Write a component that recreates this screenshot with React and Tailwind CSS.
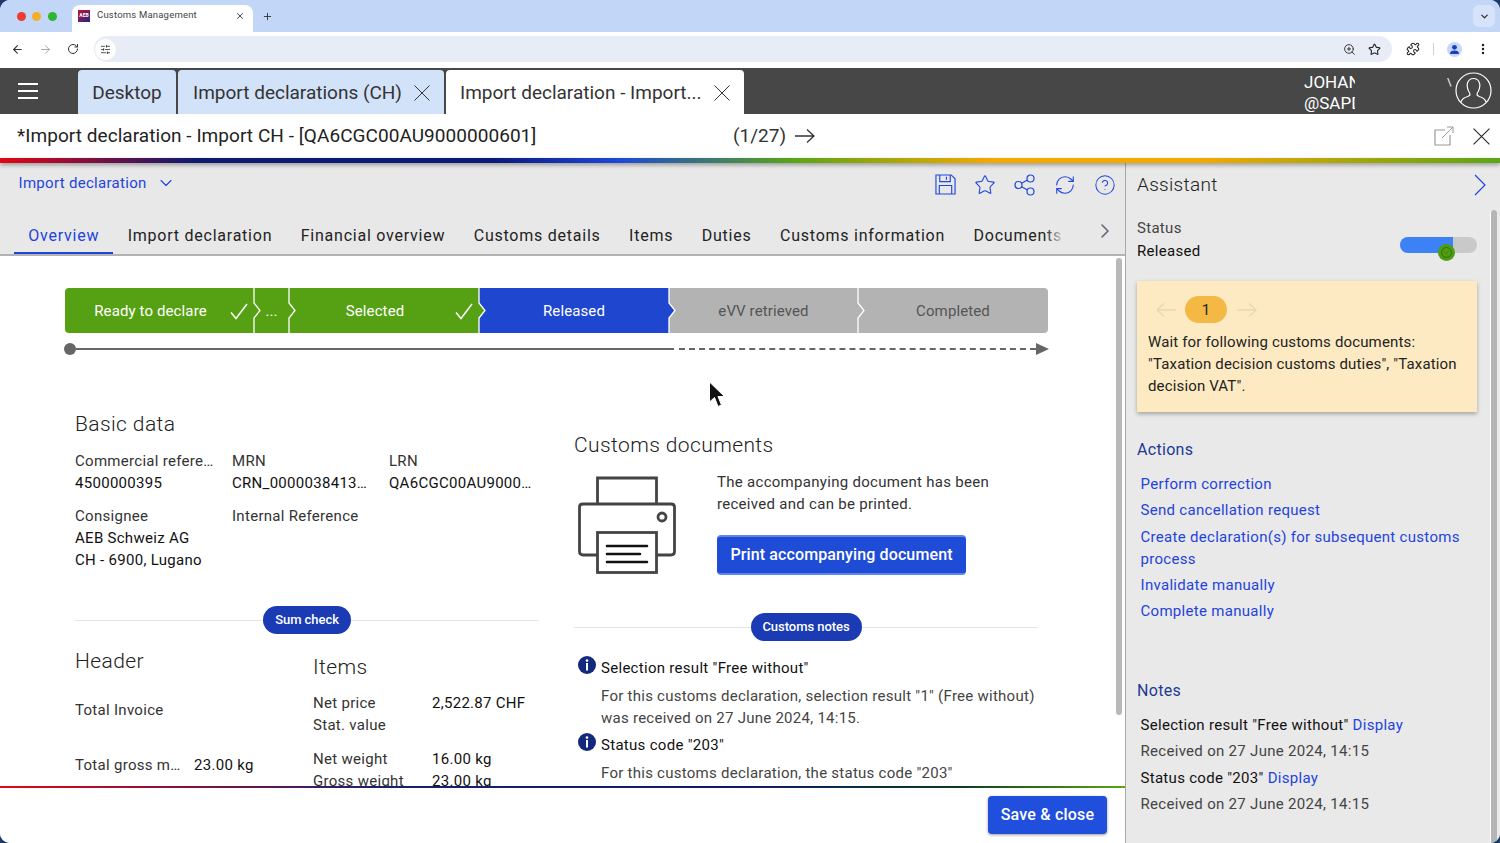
import React from 'react';
import {
  ArrowLeft, ArrowRight, RotateCw, SlidersHorizontal, ZoomIn, Star, Puzzle, EllipsisVertical,
  ChevronDown, ChevronRight, Plus, X, CircleHelp, RefreshCw, Check,
} from 'lucide-react';

const tabs = ['Overview', 'Import declaration', 'Financial overview', 'Customs details', 'Items', 'Duties', 'Customs information', 'Documents'];

const steps = [
  { label: 'Ready to declare', w: 'w-[189px]', bg: 'bg-[#55a113]', check: true, edge: '#55a113', round: 'rounded-l-[4px]' },
  { label: '...', w: 'w-[35px]', bg: 'bg-[#55a113]', edge: '#55a113' },
  { label: 'Selected', w: 'w-[190px]', bg: 'bg-[#55a113]', check: true, edge: '#55a113' },
  { label: 'Released', w: 'w-[190px]', bg: 'bg-[#1e46cf]', edge: '#1e46cf' },
  { label: 'eVV retrieved', w: 'w-[189px]', bg: 'bg-[#b3b3b3]', dark: true, edge: '#b3b3b3' },
  { label: 'Completed', w: 'w-[190px]', bg: 'bg-[#b3b3b3]', dark: true, round: 'rounded-r-[4px]' },
];

const links = ['Perform correction', 'Send cancellation request', 'Create declaration(s) for subsequent customs process', 'Invalidate manually', 'Complete manually'];

const Cross = ({ size, className = '' }) => (
  <svg width={size} height={size} viewBox="0 0 16 16" fill="none" stroke="currentColor" strokeWidth="1" className={className}>
    <path d="M0.5 0.5 L15.5 15.5 M15.5 0.5 L0.5 15.5" />
  </svg>
);

const LongArrow = ({ left, className = '' }) => (
  <svg width="20" height="14" viewBox="0 0 20 14" fill="none" stroke="currentColor" strokeWidth="1.3" className={className}>
    {left ? <path d="M20 7 H1 M8 0.5 L1 7 L8 13.5" /> : <path d="M0 7 H19 M12 0.5 L19 7 L12 13.5" />}
  </svg>
);

const Stepper = () => (
  <div className="flex h-[45px] w-[983px]">
    {steps.map((s) => (
      <div key={s.label} className={`relative flex items-center justify-center text-[15px] tracking-[0.12px] ${s.w} ${s.bg} ${s.round || ''} ${s.dark ? 'text-[#555]' : 'text-white'}`}>
        <span className={s.check ? 'pr-[18px]' : ''}>{s.label}</span>
        {s.check && (
          <svg width="18" height="17" viewBox="0 0 18 17" fill="none" className="absolute right-[6px] top-[15px]">
            <path d="M1 9.5 L6 15.5 L17 1" stroke="#fff" strokeWidth="1.5" />
          </svg>
        )}
        {s.edge && (
          <svg width="9" height="45" viewBox="0 0 9 45" className="absolute right-[-8px] top-0 z-10">
            <path d="M1 15 L7 22.5 L1 30 Z" fill={s.edge} />
            <path d="M1 0 V15 L7 22.5 L1 30 V45" fill="none" stroke="#fff" strokeWidth="1.3" />
          </svg>
        )}
      </div>
    ))}
  </div>
);

const Progress = () => (
  <div className="-ml-[1px] mt-[10px] flex w-[985px] items-center">
    <div className="h-[12px] w-[12px] rounded-full bg-[#666]" />
    <div className="h-[2px] w-[598px] bg-[#666]" />
    <div className="ml-[5px] flex-1 border-t-2 border-dashed border-[#666]" />
    <svg width="13" height="12" viewBox="0 0 13 12"><path d="M0 0 L13 6 L0 12 Z" fill="#666" /></svg>
  </div>
);

const Divider = ({ label, pill }) => (
  <div className="flex h-[28px] items-center">
    <div className="h-[1px] flex-1 bg-[#e4e4e4]" />
    <div className={`flex h-[28px] items-center justify-center rounded-full bg-[#1a3bb3] text-[13px] font-medium tracking-[-0.05px] text-white ${pill}`}>{label}</div>
    <div className="h-[1px] flex-1 bg-[#e4e4e4]" />
  </div>
);

const InfoIcon = () => (
  <svg width="18" height="18" viewBox="0 0 18 18" className="-mt-[1px] shrink-0">
    <circle cx="9" cy="9" r="9" fill="#12297d" />
    <circle cx="9" cy="4.6" r="1.3" fill="#fff" />
    <rect x="8" y="7" width="2" height="7.5" fill="#fff" />
  </svg>
);

const PrinterIcon = () => (
  <svg width="98" height="98" viewBox="0 0 98 98" fill="none" className="ml-[4px] mt-[5px] shrink-0">
    <path d="M19.5 28 V2 H78.5 V28" stroke="#444" strokeWidth="2.8" />
    <path d="M19.5 79 H5 Q1.5 79 1.5 75.5 V31 Q1.5 28 5 28 H93 Q96.5 28 96.5 31 V75.5 Q96.5 79 93 79 H78.5" stroke="#444" strokeWidth="2.8" />
    <rect x="19.5" y="56.5" width="59" height="40" stroke="#444" strokeWidth="2.8" />
    <circle cx="84" cy="41" r="4" stroke="#444" strokeWidth="2.8" />
    <path d="M29 70 H69 M29 78 H62 M29 86 H69" stroke="#111" strokeWidth="2.6" strokeLinecap="round" />
  </svg>
);

const BrowserChrome = () => (
  <>
    <div className="flex h-[32px] items-end bg-[#c2d6f8] pl-[16.5px]">
      <div className="mb-[11px] flex gap-[6.5px]">
        <div className="h-[9px] w-[9px] rounded-full bg-[#ee3b30]" />
        <div className="h-[9px] w-[9px] rounded-full bg-[#f5ad2b]" />
        <div className="h-[9px] w-[9px] rounded-full bg-[#2fb52f]" />
      </div>
      <div className="ml-[15.5px] flex h-[27px] w-[181px] items-center rounded-t-[8px] bg-white pb-[6px] pl-[6px] pr-[8px]">
        <div className="flex h-[12px] w-[12px] items-center justify-center overflow-hidden bg-[linear-gradient(135deg,#c2122f,#1c2a8c)] text-[5px] font-bold text-white">AEB</div>
        <span className="ml-[7px] flex-1 text-[9.5px] tracking-[0.2px] text-[#444]">Customs Management</span>
        <X size={10} strokeWidth={2} className="text-[#222]" />
      </div>
      <Plus size={11} strokeWidth={2} className="mb-[10px] ml-[9px] text-[#333]" />
      <div className="mb-[5px] ml-auto mr-[5px] flex h-[22px] w-[22px] items-center justify-center rounded-[6px] bg-[#d6e3fa]">
        <ChevronDown size={11} strokeWidth={2.5} className="text-[#222]" />
      </div>
    </div>
    <div className="flex h-[36px] items-center bg-white pb-[2px] pl-[11px]">
      <ArrowLeft size={13} strokeWidth={2} className="text-[#333]" />
      <ArrowRight size={13} strokeWidth={1.6} className="ml-[15px] text-[#999]" />
      <RotateCw size={12} strokeWidth={2} className="ml-[15px] text-[#333]" />
      <div className="ml-[15px] flex h-[26px] w-[1298px] items-center rounded-full bg-[#e7ecf6] pl-[1px] pr-[11px]">
        <div className="flex h-[21px] w-[21px] items-center justify-center rounded-full bg-white">
          <SlidersHorizontal size={11} strokeWidth={1.8} className="text-[#333]" />
        </div>
        <ZoomIn size={13} strokeWidth={1.8} className="ml-auto text-[#333]" />
        <Star size={13} strokeWidth={2} className="ml-[12px] text-[#222]" />
      </div>
      <Puzzle size={14} strokeWidth={1.8} className="ml-[14px] text-[#222]" />
      <div className="ml-[13px] h-[12px] w-[1px] bg-[#c5d3ea]" />
      <div className="ml-[13px] flex h-[15px] w-[15px] items-center justify-center rounded-full bg-[#c6d7f8]">
        <svg width="11" height="11" viewBox="0 0 11 11"><circle cx="5.5" cy="3.3" r="2.4" fill="#1a3fb8" /><path d="M1 10 Q1 6.6 5.5 6.6 Q10 6.6 10 10 Z" fill="#1a3fb8" /></svg>
      </div>
      <EllipsisVertical size={14} strokeWidth={2.2} className="ml-[14px] text-[#222]" />
    </div>
  </>
);

const AppHeader = () => (
  <div className="flex h-[46px] items-end bg-[#474747] pt-[2px]">
    <div className="mb-[15px] ml-[18px] flex w-[20px] flex-col gap-[5px]">
      <div className="h-[2px] bg-white" />
      <div className="h-[2px] bg-white" />
      <div className="h-[2px] bg-white" />
    </div>
    <div className="ml-[40px] flex h-[44px] w-[98px] items-center justify-center rounded-t-[4px] bg-[#d2e2f8] pt-[2px] text-[19px] text-[#333]">Desktop</div>
    <div className="ml-[2px] flex h-[44px] w-[266px] items-center rounded-t-[4px] bg-[#d2e2f8] pl-[15px] pt-[2px] text-[19px] text-[#333]">
      <span className="whitespace-nowrap">Import declarations (CH)</span>
      <Cross size={16} className="ml-[12px] text-[#333]" />
    </div>
    <div className="ml-[2px] flex h-[44px] w-[298px] items-center rounded-t-[4px] bg-white pl-[14px] pt-[2px] text-[19px] text-[#333]">
      <span className="whitespace-nowrap">Import declaration - Import...</span>
      <Cross size={16} className="ml-[12px] text-[#333]" />
    </div>
    <div className="ml-[560px] h-[44px] w-[51px] overflow-hidden whitespace-nowrap pt-[2px] text-[17px] leading-[21px] text-white">
      <div>JOHANNES</div>
      <div>@SAPDEMO</div>
    </div>
    <div className="mb-[26px] ml-[92px] h-[10px] w-[5px] overflow-hidden text-[11px] leading-[10px] text-white">\</div>
    <svg width="37" height="37" viewBox="0 0 37 37" fill="none" className="mb-[5px] ml-[3px]" stroke="#fff" strokeWidth="1.2">
      <circle cx="18.5" cy="18.5" r="17.5" />
      <path d="M6 30 Q7 26 13 24.5 L15 23 Q15 21 13.5 19 Q11.5 14 12.5 11 Q14 6.5 18.5 6.5 Q23 6.5 24.5 11 Q25.5 14 23.5 19 Q22 21 22 23 L24 24.5 Q30 26 31 30" />
    </svg>
  </div>
);

const TitleBar = () => (
  <div className="flex h-[44px] items-center bg-white pl-[17px] text-[19px] text-[#222]">
    <span className="w-[716px] whitespace-nowrap tracking-[0.05px]">*Import declaration - Import CH - [QA6CGC00AU9000000601]</span>
    <span className="w-[52px] text-[#333]">(1/27)</span>
    <LongArrow className="ml-[10px] text-[#333]" />
    <svg width="20" height="20" viewBox="0 0 20 20" fill="none" className="ml-[619px]">
      <path d="M11 4 H1 V19 H16 V9" stroke="#999" strokeWidth="1.2" />
      <path d="M8 12 L19 1 M13 1 H19 V7" stroke="#999" strokeWidth="1" />
    </svg>
    <Cross size={17} className="ml-[19px] text-[#222]" />
  </div>
);

const Toolbar = () => (
  <div className="relative h-[93px] shrink-0 border-b-2 border-[#b3b3b3] bg-[#e8e8e8]">
    <div className="flex items-start pl-[18.5px] pr-[9px] pt-[9px]">
      <span className="text-[15px] leading-[22px] tracking-[0.3px] text-[#1f44dc]">Import declaration</span>
      <ChevronDown size={20} strokeWidth={1.3} className="ml-[9px] mt-[1px] text-[#1f44dc]" />
      <div className="ml-auto mt-[2px] flex gap-[18px] text-[#2148dc]">
        <svg width="21" height="21" viewBox="0 0 22 22" fill="none" stroke="currentColor" strokeWidth="1.2">
          <path d="M1 1 H17 L21 5 V21 H1 Z" />
          <path d="M5 1 V8 H16 V1 M12 3 V6 M4.5 21 V12 H17.5 V21" />
        </svg>
        <Star size={22} strokeWidth={1.2} />
        <svg width="22" height="22" viewBox="0 0 22 22" fill="none" stroke="currentColor" strokeWidth="1.2">
          <circle cx="4.5" cy="11" r="3.5" /><circle cx="16.5" cy="4.5" r="3.5" /><circle cx="16.5" cy="17.5" r="3.5" />
          <path d="M7.5 9.2 L13.5 6 M7.5 12.8 L13.5 16" />
        </svg>
        <RefreshCw size={22} strokeWidth={1.2} />
        <CircleHelp size={22} strokeWidth={1.1} />
      </div>
    </div>
    <div className="absolute bottom-0 left-[14px] flex">
      {tabs.map((t, i) => (
        <div key={t} className={`whitespace-nowrap px-[14.25px] pb-[4px] text-[16px] leading-[24px] tracking-[0.76px] ${i === 0 ? 'border-b-2 border-[#1f44dc] text-[#1f44dc]' : 'border-b-2 border-transparent text-[#222]'}`}>{t}</div>
      ))}
    </div>
    <div className="absolute bottom-[4px] left-[1045px] h-[28px] w-[20px] bg-gradient-to-r from-transparent to-[#e8e8e8]" />
    <ChevronRight size={24} strokeWidth={1.6} className="absolute left-[1093px] top-[56px] text-[#667]" />
  </div>
);

const Label = ({ children, className = '' }) => <div className={`truncate text-[#333] ${className}`}>{children}</div>;

const Content = () => (
  <div className="relative min-h-0 flex-1 overflow-hidden bg-white text-[15px] leading-[22px] tracking-[0.29px]">
    <div className="pl-[65px] pt-[32px]">
      <Stepper />
      <Progress />
      <div className="mt-[55px] flex">
        <div className="ml-[10px] w-[464px]">
          <h2 className="text-[21px] font-light leading-[28px] tracking-[0.4px] text-[#222]">Basic data</h2>
          <div className="mt-[12px] grid grid-cols-[157px_157px_1fr] text-[#222]">
            <Label className="pr-[18px]">Commercial reference</Label>
            <Label>MRN</Label>
            <Label>LRN</Label>
            <div className="text-[#111]">4500000395</div>
            <div className="truncate pr-[20px] text-[#111]">CRN_00000384130000</div>
            <div className="truncate pr-[4px] text-[#111]">QA6CGC00AU9000000601</div>
            <div className="mt-[11px]">
              <Label>Consignee</Label>
              <div className="text-[#111]">AEB Schweiz AG</div>
              <div className="text-[#111]">CH - 6900, Lugano</div>
            </div>
            <div className="mt-[11px]"><Label>Internal Reference</Label></div>
          </div>
          <div className="mt-[35px]"><Divider label="Sum check" pill="w-[88px]" /></div>
          <div className="flex">
            <div className="w-[238px]">
              <h2 className="mt-[13px] text-[21px] font-light leading-[28px] tracking-[0.4px] text-[#222]">Header</h2>
              <div className="mt-[24px]"><Label>Total Invoice</Label></div>
              <div className="mt-[33px] flex">
                <Label className="w-[119px] pr-[8px]">Total gross mass</Label>
                <div className="text-[#111]">23.00 kg</div>
              </div>
            </div>
            <div>
              <h2 className="mt-[19px] text-[21px] font-light leading-[28px] tracking-[0.4px] text-[#222]">Items</h2>
              <div className="mt-[11px] grid grid-cols-[119px_1fr]">
                <Label>Net price</Label>
                <div className="text-[#111]">2,522.87 CHF</div>
                <Label>Stat. value</Label>
                <div />
                <Label className="mt-[12px]">Net weight</Label>
                <div className="mt-[12px] text-[#111]">16.00 kg</div>
                <Label>Gross weight</Label>
                <div className="text-[#111]">23.00 kg</div>
              </div>
            </div>
          </div>
        </div>
        <div className="ml-[35px] w-[464px] pt-[21px]">
          <h2 className="text-[21px] font-light leading-[28px] tracking-[0.4px] text-[#222]">Customs documents</h2>
          <div className="mt-[12px] flex h-[104px]">
            <PrinterIcon />
            <div className="ml-[41px]">
              <div className="text-[#333]">The accompanying document has been<br />received and can be printed.</div>
              <button className="mt-[20px] h-[40px] w-[249px] rounded-[4px] border-y-2 border-[#5d86ea] bg-[#1f4cd6] text-[16px] font-medium tracking-[0.12px] text-white">Print accompanying document</button>
            </div>
          </div>
          <div className="mt-[38px]"><Divider label="Customs notes" pill="w-[111px]" /></div>
          <div className="mt-[16px] flex items-start">
            <div className="ml-[4px]"><InfoIcon /></div>
            <div className="ml-[5px] text-[#111]">Selection result "Free without"</div>
          </div>
          <div className="ml-[27px] mt-[6px] tracking-[0.26px] text-[#444]">For this customs declaration, selection result "1" (Free without)<br />was received on 27 June 2024, 14:15.</div>
          <div className="mt-[5px] flex items-start">
            <div className="ml-[4px]"><InfoIcon /></div>
            <div className="ml-[5px] text-[#111]">Status code "203"</div>
          </div>
          <div className="ml-[27px] mt-[6px] tracking-[0.26px] text-[#444]">For this customs declaration, the status code "203"</div>
        </div>
      </div>
    </div>
    <div className="absolute right-[3px] top-[2px] h-[457px] w-[6px] rounded-full bg-[#b9b9b9]" />
  </div>
);

const Assistant = () => (
  <div className="relative flex-1 overflow-hidden bg-[#e9e9e9] pl-[11px] pr-[23px] pt-[8px] text-[15px] leading-[22px] tracking-[0.3px] text-[#222]">
    <div className="flex h-[28px] items-center justify-between">
      <span className="text-[19px] font-light tracking-[0.3px] text-[#222]">Assistant</span>
      <svg width="12" height="22" viewBox="0 0 12 22" fill="none" className="-mr-[9px]"><path d="M1 1 L11 11 L1 21" stroke="#1f44dc" strokeWidth="1.2" /></svg>
    </div>
    <div className="mt-[18px] flex items-start justify-between">
      <div>
        <div className="text-[#444]">Status</div>
        <div className="mt-[1px] text-[#111]">Released</div>
      </div>
      <div className="relative mt-[20px] h-[16px] w-[77px] overflow-visible rounded-full bg-[#c9c9c9]">
        <div className="h-[16px] w-[53px] rounded-l-full bg-[#3c82f6]" />
        <div className="absolute left-[38px] top-[7px] flex h-[17px] w-[17px] items-center justify-center rounded-full bg-[#4f9e10]">
          <div className="flex h-[11px] w-[11px] items-center justify-center rounded-full border border-[#2f6d10]">
            <Check size={7} strokeWidth={2} className="text-[#2f6d10]" />
          </div>
        </div>
      </div>
    </div>
    <div className="mt-[19px] h-[131px] bg-[#fdeac3] px-[11px] pt-[15px] tracking-[0.15px] shadow-[0_2px_4px_rgba(0,0,0,0.3)]">
      <div className="flex items-center">
        <LongArrow left className="ml-[8px] text-[#e6d7b5]" />
        <div className="ml-[9px] flex h-[27px] w-[42px] items-center justify-center rounded-full bg-[#f3b944] text-[#222]">1</div>
        <LongArrow className="ml-[10px] text-[#e6d7b5]" />
      </div>
      <div className="mt-[8px] text-[#222]">Wait for following customs documents: "Taxation decision customs duties", "Taxation decision VAT".</div>
    </div>
    <div className="mt-[27px] text-[16px] text-[#1c3a94]">Actions</div>
    <div className="ml-[3.5px] mt-[12px] flex flex-col gap-[4.3px] text-[#1f44dc]">
      {links.map((l) => <div key={l}>{l}</div>)}
    </div>
    <div className="mt-[58px] text-[16px] text-[#1c3a94]">Notes</div>
    <div className="ml-[3.5px] mt-[12px] flex flex-col gap-[4.2px]">
      <div className="text-[#111]">Selection result "Free without" <span className="text-[#1f44dc]">Display</span></div>
      <div className="text-[#444]">Received on 27 June 2024, 14:15</div>
      <div className="text-[#111]">Status code "203" <span className="text-[#1f44dc]">Display</span></div>
      <div className="text-[#444]">Received on 27 June 2024, 14:15</div>
    </div>
    <div className="absolute right-[3px] top-[47px] h-[640px] w-[7px] rounded-full border-l border-white bg-[#b5b5b5]" />
  </div>
);

const Cursor = () => (
  <svg width="18" height="28" viewBox="0 0 18 28" className="absolute left-[708px] top-[381px] z-30">
    <path d="M1.5 1 V21 L6.5 16.5 L10 25.5 L13.5 24 L10 15.5 L16.5 15.5 Z" fill="#111" stroke="#fff" strokeWidth="1" />
  </svg>
);

export default function App() {
  return (
    <div className="relative h-[843px] w-[1500px] overflow-hidden bg-[#1e3a6a] font-['Roboto',sans-serif]">
      <div className="flex h-full flex-col overflow-hidden rounded-[10px] bg-white">
        <BrowserChrome />
        <AppHeader />
        <TitleBar />
        <div className="relative z-10 h-[5px] shrink-0 bg-[linear-gradient(90deg,#e30613_0%,#0c1a6e_13%,#0b1a7a_33%,#1d46d8_41%,#5aa514_53%,#f5a800_66%,#f5a800_80%,#5aa514_100%)] shadow-[0_2px_4px_rgba(0,0,0,0.35)]" />
        <div className="flex min-h-0 flex-1">
          <div className="flex w-[1125px] shrink-0 flex-col">
            <Toolbar />
            <Content />
            <div className="h-[2px] shrink-0 bg-[linear-gradient(90deg,#e30613_0%,#16206f_35%,#0c1a6e_65%,#0b3a20_85%,#5aa514_100%)]" />
            <div className="flex h-[55px] shrink-0 justify-end bg-white pr-[18px] pt-[8px]">
              <button className="h-[38px] w-[119px] rounded-[4px] bg-[#1f4fdc] text-[16px] font-medium tracking-[0.2px] text-white shadow-[0_1px_3px_rgba(0,0,0,0.4)]">Save &amp; close</button>
            </div>
          </div>
          <div className="w-[1px] shrink-0 bg-[#a8a8a8]" />
          <Assistant />
        </div>
      </div>
      <Cursor />
    </div>
  );
}
